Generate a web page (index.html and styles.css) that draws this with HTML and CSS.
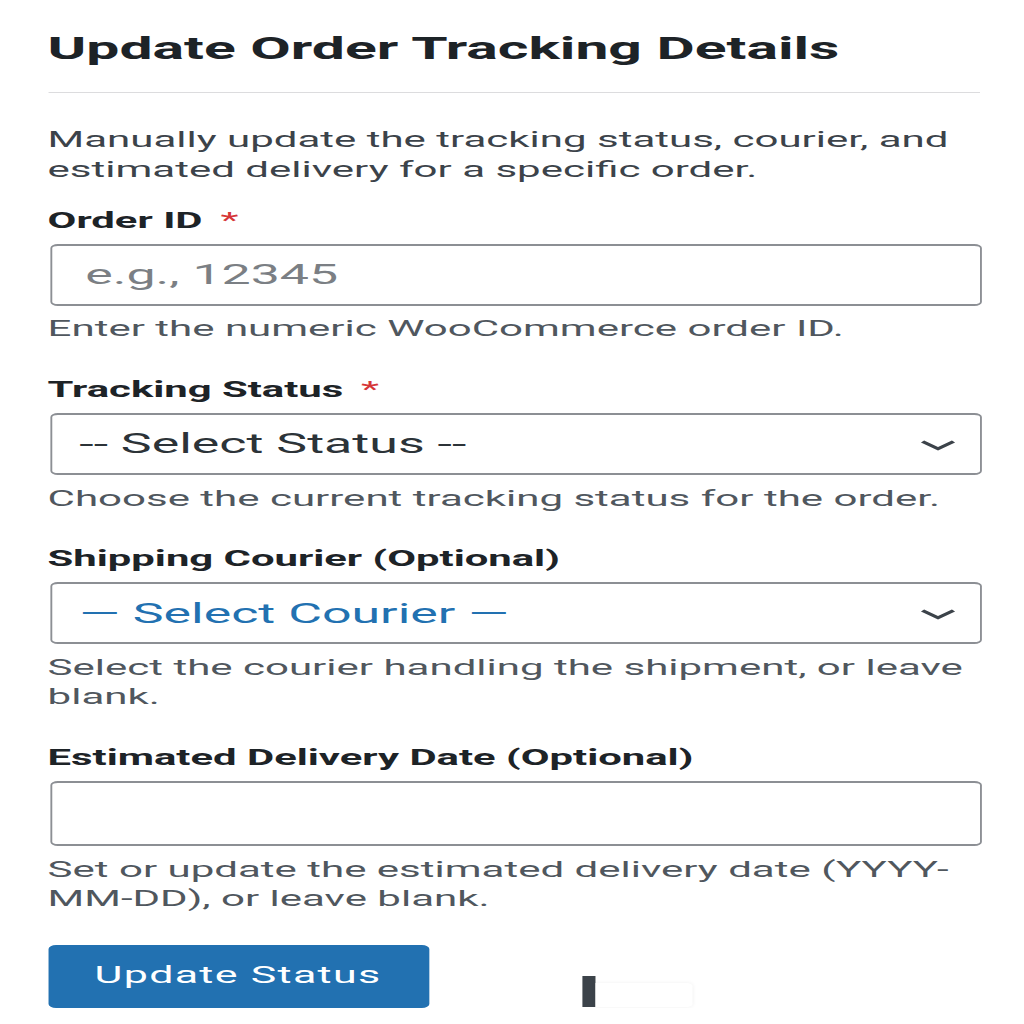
FILE: index.html
```html
<!DOCTYPE html>
<html lang="en">
<head>
<meta charset="utf-8">
<title>Update Order Tracking Details</title>
<link rel="stylesheet" href="styles.css">
</head>
<body>
<div class="page">
  <h1 class="title">Update Order Tracking Details</h1>
  <hr class="rule">
  <p class="intro">Manually update the tracking status, courier, and estimated delivery for a specific order.</p>
  <form class="form" onsubmit="return false">
    <div class="field">
      <label class="label" for="order-id">Order ID <span class="req">*</span></label>
      <input class="control" id="order-id" type="text" placeholder="e.g., 12345">
      <p class="help">Enter the numeric WooCommerce order ID.</p>
    </div>
    <div class="field">
      <label class="label" for="status">Tracking Status <span class="req">*</span></label>
      <div class="select-wrap">
        <select class="control select" id="status">
          <option>-- Select Status --</option>
        </select>
        <svg class="chevron" viewBox="0 0 19 11" preserveAspectRatio="none" aria-hidden="true"><path d="M1.2 1.6 L9.5 8.8 L17.8 1.6"/></svg>
      </div>
      <p class="help">Choose the current tracking status for the order.</p>
    </div>
    <div class="field">
      <label class="label" for="courier">Shipping Courier (Optional)</label>
      <div class="select-wrap">
        <select class="control select select-courier" id="courier">
          <option>&mdash; Select Courier &mdash;</option>
        </select>
        <svg class="chevron" viewBox="0 0 19 11" preserveAspectRatio="none" aria-hidden="true"><path d="M1.2 1.6 L9.5 8.8 L17.8 1.6"/></svg>
      </div>
      <p class="help">Select the courier handling the shipment, or leave blank.</p>
    </div>
    <div class="field">
      <label class="label" for="eta">Estimated Delivery Date (Optional)</label>
      <input class="control control-date" id="eta" type="text">
      <p class="help">Set or update the estimated delivery date (YYYY-MM-DD), or leave blank.</p>
    </div>
    <div class="actions">
      <button class="btn" type="submit">Update Status</button>
      <div class="spinner" aria-hidden="true"><span class="spinner-bar"></span><span class="spinner-box"></span></div>
    </div>
  </form>
</div>
</body>
</html>
```
FILE: styles.css
```css
html, body {
  margin: 0;
  padding: 0;
  overflow: hidden;
  background: #ffffff;
}

/* The whole page is drawn horizontally stretched, as in the source capture */
.page {
  --sx: 1.8667;
  width: 548.5px;
  box-sizing: border-box;
  padding: 28.7px 20px 0 25.5px;
  transform: scaleX(var(--sx));
  transform-origin: 0 0;
  font-family: Roboto, "Noto Sans", sans-serif;
  color: #3c434a;
}

.title {
  margin: 0;
  font-size: 31.5px;
  line-height: 40px;
  font-weight: 700;
  color: #1d2327;
}

.rule {
  width: 499px;
  margin: 23.3px 0 32.2px;
  border: 0;
  border-top: 1px solid #dcdcde;
  height: 0;
}

.intro {
  margin: 0;
  font-size: 22.5px;
  line-height: 29.5px;
  color: #3c434a;
}

.form {
  width: 499px;
  margin-top: 21.6px;
  display: flex;
  flex-direction: column;
  gap: 31.2px;
}

.field {
  display: flex;
  flex-direction: column;
}

.label {
  display: block;
  margin-bottom: 8.3px;
  font-size: 22.4px;
  line-height: 29.5px;
  font-weight: 700;
  color: #1d2327;
}

.req {
  margin-left: 4px;
  font-weight: 400;
  color: #d63638;
}

.control {
  box-sizing: border-box;
  width: 100%;
  margin: 0 0 0 1.7px;
  height: 62px;
  padding: 0 12px 0 17.5px;
  border: solid #8c8f94;
  border-width: 2px 1px;
  border-radius: 4px;
  background: #ffffff;
  font-family: Roboto, "Noto Sans", sans-serif;
  font-size: 27.8px;
  color: #2c3338;
  outline: none;
}

.control::placeholder {
  color: #7b7f84;
  opacity: 1;
}

.control-date {
  height: 65px;
}

.select-wrap {
  position: relative;
}

.select {
  display: block;
  appearance: none;
  -webkit-appearance: none;
  padding: 0 40px 0 14.3px;
}

.select-courier {
  color: #2271b1;
}

.chevron {
  position: absolute;
  right: 12.5px;
  top: 27px;
  width: 19px;
  height: 11px;
  pointer-events: none;
  fill: none;
  stroke: #3c434a;
  stroke-width: 2.6;
}

.help {
  margin: 8.8px 0 0;
  font-size: 22.5px;
  line-height: 29.5px;
  color: #50575e;
}

.actions {
  display: flex;
  align-items: flex-end;
  gap: 82.5px;
}

.btn {
  box-sizing: border-box;
  width: 204px;
  height: 63px;
  padding: 0 0 2px;
  border: 0;
  border-radius: 4px;
  background: #2271b1;
  color: #ffffff;
  font-family: Roboto, "Noto Sans", sans-serif;
  font-size: 23px;
  letter-spacing: 0.7px;
  cursor: pointer;
}

.spinner {
  display: flex;
  align-items: flex-end;
  margin-bottom: 1px;
}

.spinner-bar {
  display: block;
  width: 7px;
  height: 31px;
  background: #3c434a;
}

.spinner-box {
  display: block;
  width: 52px;
  height: 24px;
  background: #ffffff;
  border-radius: 0 3px 3px 0;
  box-shadow: 0 0 3px rgba(0, 0, 0, 0.06);
}
```
